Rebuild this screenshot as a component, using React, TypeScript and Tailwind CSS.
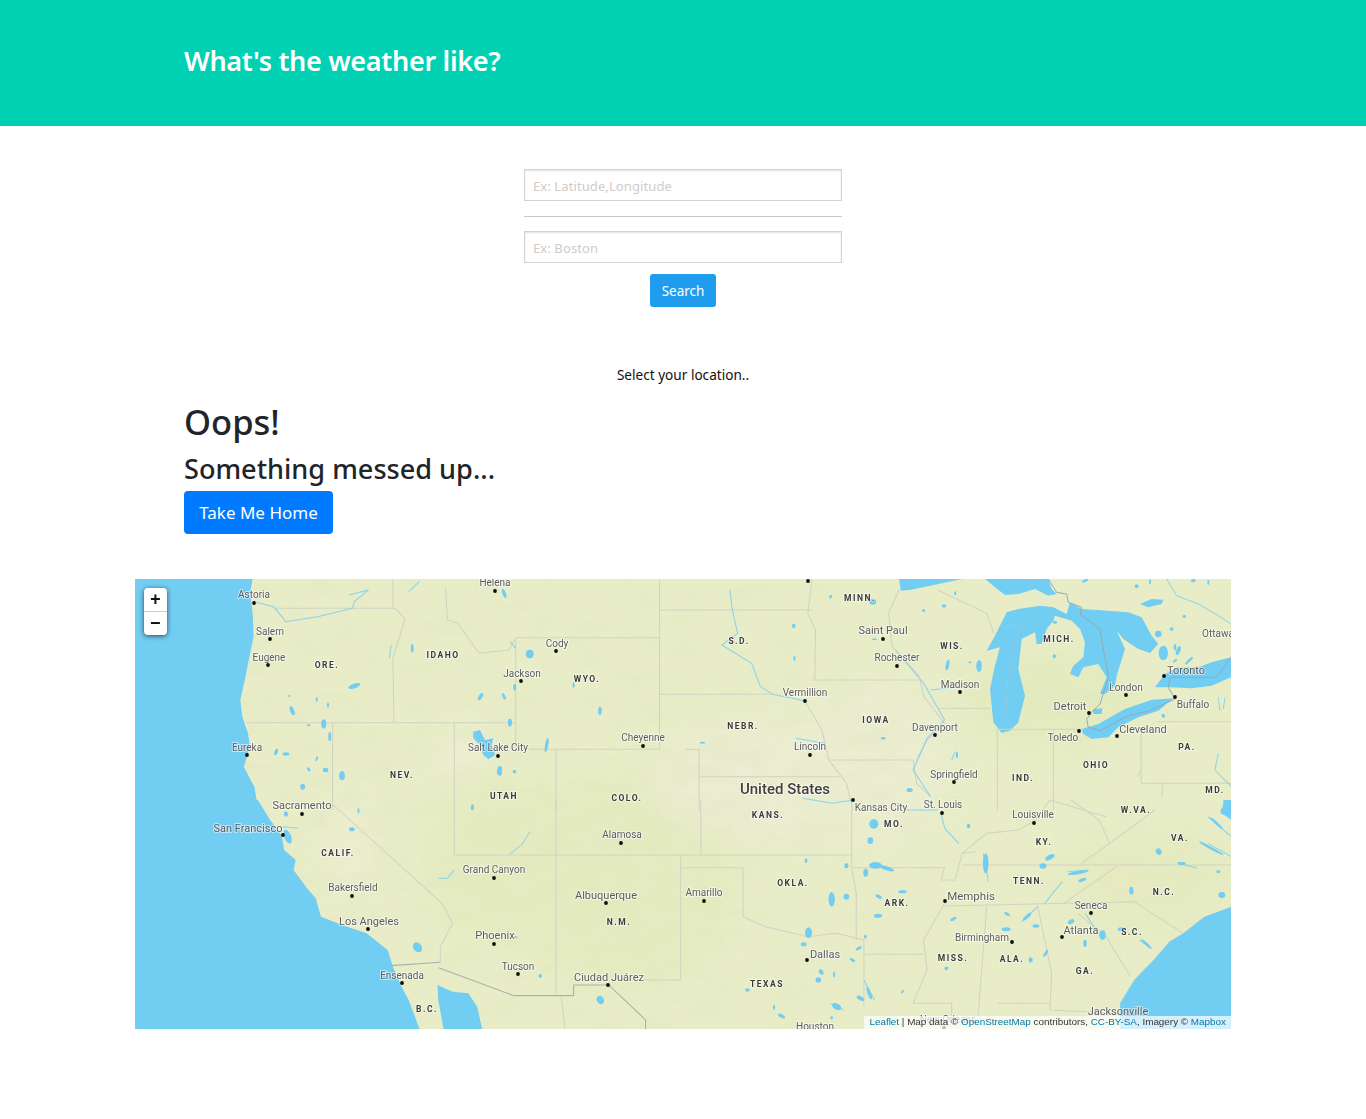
import React from "react";

const WATER = "#72cdf3";
const Z1 = "translate(135,570) scale(0.3509,0.3333)";
const Z2 = "translate(685,570) scale(0.3509,0.3333)";
const Z3 = "translate(135,800) scale(0.3509,0.3333)";
const Z4 = "translate(685,800) scale(0.3509,0.3333)";
const ZL = "translate(985,579) scale(0.3333)";
const ZU = "translate(430,690) scale(0.3333)";

type C = [string, number, number, number?, number?, number?];
const cities: C[] = [
  ["Helena",495,586,495,591],["Astoria",254,598,254,603],["Salem",270,635,270,639],["Eugene",269,661,268,665],
  ["Cody",557,647,556,651],["Jackson",522,677,521,681],["Saint Paul",883,634,883,639,11],["Rochester",897,661,897,666],
  ["Vermillion",805,696,805,701],["Madison",960,688,960,692],["Davenport",935,731,935,735],["Lincoln",810,750,810,755],
  ["Eureka",247,751,247,755],["Salt Lake City",498,751,498,756],["Cheyenne",643,741,643,746],["Ottawa",1218,637],
  ["Toronto",1186,674,1164,676,11],["London",1126,691,1126,695],["Buffalo",1193,708,1175,697],["Detroit",1070,710,1089,713,11],
  ["Toledo",1063,741,1079,731],["Cleveland",1143,733,1117,736,11],["Springfield",954,778,954,782],["Kansas City",881,811,853,800],
  ["St. Louis",943,808,942,813],["Louisville",1033,818,1034,823],["Sacramento",302,809,302,814,11],["San Francisco",248,832,283,835,11],
  ["Alamosa",622,838,621,843],["Grand Canyon",494,873,494,878],["Bakersfield",353,891,352,896],["Albuquerque",606,899,606,903,11],
  ["Amarillo",704,896,704,901],["Memphis",971,900,945,901,11.5],["Seneca",1091,909,1091,913],["Los Angeles",369,925,368,929,11],
  ["Phoenix",495,939,494,944,11],["Birmingham",982,941,1012,942],["Atlanta",1081,934,1062,937,11],["Tucson",518,970,518,974],
  ["Dallas",825,958,807,960,11],["Ciudad Juárez",609,981,608,985,11],["Ensenada",402,979,402,983],["Jacksonville",1118,1015,undefined,undefined,11],
  ["Houston",815,1030,undefined,undefined,10],["New Orleans",948,1023,944,1028,10],
];
const states: [string, number, number][] = [
  ["ORE.",327,668],["IDAHO",443,658],["WYO.",587,682],["MINN.",860,601],["S.D.",739,644],["WIS.",952,649],["MICH.",1059,642],
  ["NEBR.",743,729],["IOWA",876,723],["NEV.",402,778],["UTAH",504,799],["COLO.",627,801],["KANS.",768,818],["MO.",894,827],
  ["IND.",1023,781],["OHIO",1096,768],["PA.",1187,750],["MD.",1215,793],["W.VA.",1136,813],["VA.",1180,841],["KY.",1044,845],
  ["CALIF.",338,856],["N.M.",619,925],["OKLA.",793,886],["ARK.",897,906],["TENN.",1029,884],["N.C.",1164,895],["S.C.",1132,935],
  ["GA.",1085,974],["ALA.",1012,962],["MISS.",953,961],["TEXAS",767,987],["B.C.",427,1012],
];

const borders: Record<string, string[]> = {
  [Z1]: [
    "M400 115H740L770 145L735 265L738 458","M315 458H1085","M910 458V720","M563 458V720","M735 27V115",
    "M885 50L890 150L920 160L980 250L1065 240L1085 205","M1085 203H1495V538H1085V203","M1200 538V720","M1495 27V203","M1495 120H1568","M1495 373H1568",
  ],
  [Z2]: [
    "M0 120H362","M362 27L350 130L372 180L370 330","M0 373H250","M362 330H670L680 380L740 460L690 510L660 570","M410 570H650L660 640L700 680","M340 390L390 480L410 570L460 640L478 720",
    "M40 620H440","M40 538H0","M40 538V720","M610 60L580 130L590 230L670 320","M720 415H870","M720 60L860 130L880 190","M890 480V720","M1050 478V720","M890 478H1135","M1300 490V640H1557","M1345 455H1557","M1360 640V680","M1300 600L1290 620",
  ],
  [Z3]: ["M910 0V165","M910 165H1568","M1200 0V585","M1555 165V540H1450","M1555 205H1568","M565 15L875 310L905 370L870 440L870 490","M1215 590L1225 687"],
  [Z4]: [
    "M0 165H475","M45 0V165","M475 0V203L488 280V420","M0 203H165V350L230 380L350 410L430 400L510 420V620","M480 203H740L730 240H770L790 160L860 100L950 90L1000 60L1040 0",
    "M510 463H680","M740 310L680 420L690 510L650 610","M650 610H760V650","M790 195H1557","M740 318L1280 305L1420 400","M860 318L835 650","M1005 318L1045 520L1040 630L1240 640",
    "M1120 340L1200 410L1270 530","M890 610H1040","M1130 190L1210 130L1340 30","M1210 130L1180 60L1100 0","M790 160L830 155","M1080 310L1120 280L1230 200","M1040 0L1200 50",
  ],
};

const rivers: Record<string, string[]> = {
  [Z1]: ["M340 95L395 110L430 155L520 140L620 115L625 95L665 60L610 75","M730 225L725 265","M1070 215L1085 235","M810 35L780 65"],
  [Z2]: [
    "M128 60L135 120L150 190L105 225L190 280L215 350L250 373L340 392","M600 240L680 340L740 450L690 505L650 600L700 680","M700 360L780 350","M315 505L400 520","M770 545L760 570","M1520 550L1510 600L1557 650","M335 685L420 700L478 690",
  ],
  [Z3]: ["M865 235L890 235L910 210","M420 80L465 85"],
  [Z4]: ["M730 40L740 85L780 130","M630 30L720 30","M850 160L865 245","M1025 310L1075 245","M960 365L1005 320","M1090 215L1150 210","M1405 190L1460 205","M1490 50L1557 110","M1490 130L1557 170","M1140 340L1190 420","M1295 420L1330 445","M510 540L540 600","M415 610L450 630","M490 590L510 600"],
  [ZL]: ["M545 0L575 50L640 75L700 110L738 135","M700 355L705 395","M720 355L715 390"],
  [ZU]: ["M300 425L275 465L235 495"],
};

const blobs: Record<string, number[][]> = {
  [Z1]: [
    [625,348,18,7,-20],[518,388,3,8],[550,405,3,8],[448,422,6,14,-20],[538,462,7,14],[555,500,4,14],[1068,458,5,12],[985,380,5,12,30],[1052,380,4,10,-20],[790,235,4,13],[1125,252,11,13],
    [1082,352,4,10],[1250,345,3,9],[1325,422,4,12],[402,546,5,10,20],[430,552,10,5],[518,566,3,8,20],[495,598,4,7,-30],[543,600,8,7],[590,617,8,14],[478,650,7,9],[1040,603,6,14],[1082,605,4,5],
    [1052,70,5,14,-20],[440,378,3,3],[495,466,5,3],
  ],
  [Z2]: [
    [535,95,10,9],[310,168,5,7],[312,265,3,8],[680,122,5,4],[738,108,6,5],[770,70,3,6],[748,285,5,16,10],[838,288,8,18],[812,277,4,3],[565,505,7,4],[775,555,3,10],[640,660,9,6],[50,518,8,3],[415,80,4,6,20],[540,208,7,3],
  ],
  [Z3]: [
    [637,32,3,8],[618,88,8,6],[962,22,4,9],[805,442,12,16,-30],[1155,528,5,6],[1326,600,10,13,-20],[1085,412,5,3],[555,393,5,3],[578,390,4,2],[655,438,2,3],[430,42,6,8],[435,110,10,22,-20],
  ],
  [Z4]: [
    [538,72,13,14],[528,122,8,10],[808,78,5,7],[345,182,4,7],[460,197,6,8],[543,196,18,10],[575,205,22,6,20],[515,218,7,12],[620,275,12,5],[552,290,10,5,30],[550,347,12,6],[418,298,9,22],[460,290,8,9],[352,398,10,16],[338,433,8,6],
    [514,410,4,6],[495,445,10,4,-30],[477,480,9,4,30],[388,516,6,9,-30],[380,540,8,8],[425,523,3,9],[178,570,7,5],[254,622,3,8],[275,648,11,5,30],[432,620,14,9,30],[620,575,6,3,-40],[500,595,12,6,30],[525,580,5,20,-20],[418,653,4,5],
    [857,190,8,30],[1040,172,15,7,-30],[1020,198,10,8],[1120,218,30,5,-10],[1132,240,12,5,-20],[765,357,10,4,-30],[918,342,9,4,30],[915,388,13,6],[1000,378,10,5],[975,350,16,5,-45],[1028,460,4,12,30],[985,480,6,8],[1140,430,5,11],
    [745,505,6,5,-30],[1272,272,6,12],[1245,388,12,6],[1190,405,9,14],[1315,432,20,4,45],[1350,155,8,10,-30],[1100,365,10,6,-30],[1460,380,4,12],[1530,285,10,9],[1415,190,12,5],[1520,215,6,4],[1500,145,40,4,30],[1540,30,12,16,40],[1515,70,25,4,45],
  ],
  [ZL]: [
    [210,130,6,5],[208,232,5,6],[535,222,14,22],[580,215,6,14,20],[612,245,16,4,-45],[570,205,4,10],[520,165,10,10],[560,150,6,5],[598,112,5,5],[455,22,6,6],[625,5,7,5],[300,5,10,4,-20],[670,10,3,8],[495,8,3,8],[570,245,8,3,-40],[535,410,5,6,-30],
  ],
  [ZU]: [
    [150,20,4,11,30],[220,18,3,9,-25],[240,97,6,11],[350,165,5,22,10],[510,62,5,12],[127,352,5,8],[253,245,5,5],[208,242,7,14,10],
  ],
};

function MapArt() {
  return (
    <svg viewBox="135 579 1096 450" className="block h-full w-full">
      <defs>
        <filter id="soft"><feGaussianBlur stdDeviation="0.35" /></filter>
        <filter id="patch"><feGaussianBlur stdDeviation="14" /></filter>
        <filter id="hill" x="0" y="0" width="100%" height="100%">
          <feTurbulence type="fractalNoise" baseFrequency="0.03 0.055" numOctaves="4" seed="11" />
          <feColorMatrix values="0 0 0 0 0.72  0 0 0 0 0.77  0 0 0 0 0.46  2.2 0 0 0 -1.02" />
        </filter>
        <linearGradient id="fade" x1="0" x2="1" y1="0" y2="0">
          <stop offset="0" stopColor="#fff" />
          <stop offset="0.5" stopColor="#fff" />
          <stop offset="0.8" stopColor="#fff" stopOpacity="0.35" />
          <stop offset="1" stopColor="#fff" stopOpacity="0.2" />
        </linearGradient>
        <mask id="hillMask"><rect x="135" y="579" width="1096" height="450" fill="url(#fade)" /></mask>
      </defs>
      <rect x="135" y="579" width="1096" height="450" fill="#e8edc8" />
      <g filter="url(#patch)" opacity="0.7">
        <ellipse cx="620" cy="880" rx="120" ry="110" fill="#e4ebbe" />
        <ellipse cx="500" cy="860" rx="80" ry="90" fill="#e4ebbe" />
        <ellipse cx="1050" cy="700" rx="90" ry="50" fill="#e3eabc" />
        <ellipse cx="1150" cy="880" rx="90" ry="60" fill="#e4eabf" />
        <ellipse cx="780" cy="780" rx="130" ry="60" fill="#edecd4" />
        <ellipse cx="880" cy="760" rx="70" ry="80" fill="#ecedd3" />
        <ellipse cx="462" cy="760" rx="12" ry="26" fill="#f6eee2" />
        <ellipse cx="350" cy="850" rx="18" ry="45" fill="#f0edd6" />
      </g>
      <g mask="url(#hillMask)">
        <rect x="135" y="579" width="1096" height="450" filter="url(#hill)" opacity="0.28" />
      </g>
      <g filter="url(#soft)">
        <g fill={WATER}>
          <g transform={Z1}>
            <path d="M0 27H335L328 70L332 100L336 140L338 200L326 260L315 320L300 390L306 440L322 490L328 530L310 590L340 650L352 720H0Z" />
          </g>
          <g transform={Z3}>
            <path d="M0 0H350L385 60L418 105L425 150L458 180L452 210L490 265L515 295L530 350L590 375L660 400L720 450L735 500L760 560L780 600L812 690H0Z" />
            <path d="M880 690L864 600L862 555L905 575L950 580L975 620L990 690Z" />
          </g>
          <g transform={Z4}>
            <path d="M1240 690V610L1280 540L1340 475L1380 425L1420 400L1480 350L1557 320V690Z" />
            <path d="M1535 0L1557 0V60L1530 40Z" />
          </g>
          <g transform={Z2}>
            <path d="M610 27H790L640 60L615 62Z" />
          </g>
          <g transform={ZL}>
            <path d="M0 0H190L200 30L215 45L190 50L150 30L100 45L60 48L30 25Z" />
            <path d="M50 462L25 430L15 330L30 260L45 205L5 215L30 170L65 100L100 90L165 80L205 85L245 105L255 70L290 90L370 95L430 100L470 115L500 170L520 195L495 222L460 210L415 180L395 155L420 210L395 290L390 320L360 345L345 345L365 295L340 255L295 265L280 295L255 285L265 260L295 235L300 190L285 150L260 125L210 110L205 125L185 150L170 195L155 195L150 160L110 180L100 270L120 350L100 430L75 455Z" />
            <path d="M510 325L540 285L580 265L640 265L680 250L738 235V295L680 320L620 328L555 325Z" />
            <path d="M325 390L352 388L350 405L325 405Z" />
            <path d="M290 450L340 435L420 390L500 362L565 358L520 395L460 415L400 445L370 475L320 480L295 465Z" />
            <path d="M465 75L500 60L535 62L530 75L490 85Z" />
          </g>
          <g transform={ZU}>
            <path d="M130 125L150 120L165 150L190 145L185 165L195 195L175 208L160 195L150 165L130 145Z" />
          </g>
        </g>
        {Object.entries(borders).map(([t, ds]) => (
          <g key={t} transform={t} fill="none" stroke="#d1d3c2" strokeWidth="3">
            {ds.map((d) => <path key={d} d={d} />)}
          </g>
        ))}
        <g transform={Z3} fill="none" stroke="#b0b0aa" strokeWidth="3.2">
          <path d="M730 497L870 487" />
          <path d="M865 503L1080 587H1250V555H1350L1425 630L1455 660V690" />
        </g>
        <g transform={ZL} fill="none" strokeWidth="3">
          <path stroke="#95a9b2" d="M190 0L215 40L245 45L250 70L290 85L285 105L345 150L370 295L345 375L320 400L305 420L310 445L345 455L430 410L490 397L570 360L550 325L555 295H695L738 235" />
          <path stroke="#a0c4d4" strokeWidth="2.5" d="M60 140L105 140L70 280L60 450" />
        </g>
        {Object.entries(rivers).map(([t, ds]) => (
          <g key={t} transform={t} fill="none" stroke={WATER} strokeWidth="3" strokeOpacity="0.8" strokeLinejoin="round">
            {ds.map((d) => <path key={d} d={d} />)}
          </g>
        ))}
        {Object.entries(blobs).map(([t, es]) => (
          <g key={t} transform={t} fill={WATER}>
            {es.map((e, i) => (
              <ellipse key={i} cx={e[0]} cy={e[1]} rx={e[2]} ry={e[3]} transform={e[4] ? `rotate(${e[4]} ${e[0]} ${e[1]})` : undefined} />
            ))}
          </g>
        ))}
        <g className="font-['Roboto',sans-serif]" textAnchor="middle" style={{ paintOrder: "stroke" }} stroke="#ffffff" strokeOpacity="0.55" strokeWidth="2" strokeLinejoin="round">
          {cities.map(([n, tx, ty, , , fs]) => (
            <text key={n} x={tx} y={ty} fontSize={fs ?? 10} fill="#5c5c5c">{n}</text>
          ))}
          <text x={785} y={794} fontSize={15} fontWeight={500} fill="#3f3f3f">United States</text>
          {states.map(([n, x, y]) => (
            <text key={n} x={x} y={y} fontSize={8.5} fontWeight={700} letterSpacing={1.5} fill="#3a3a3a">{n}</text>
          ))}
        </g>
        {cities.map(([, , , dx, dy], i) =>
          dx === undefined || dy === undefined ? null : <circle key={i} cx={dx} cy={dy} r={1.9} fill="#0d0d0d" />
        )}
        <circle cx={808} cy={581} r={1.9} fill="#0d0d0d" />
      </g>
    </svg>
  );
}

export default function App() {
  return (
    <div className="min-h-[1119px] bg-white font-['Noto_Sans',sans-serif]">
      <header className="flex h-[126px] items-center bg-[#00d1b2] pb-[4px] pl-[184px]">
        <h1 className="text-[27px] font-semibold tracking-[-0.3px] text-white">What's the weather like?</h1>
      </header>

      <section className="mx-auto flex w-[318px] flex-col items-center pt-[43px]">
        <input
          placeholder="Ex: Latitude,Longitude"
          className="h-[32px] w-full border border-[#d4d4d4] px-[8px] pt-[2px] text-[13px] tracking-[0.1px] shadow-[inset_0_1px_2px_rgba(10,10,10,0.12)] outline-none placeholder:text-[#cfcbcb]"
        />
        <div className="mt-[15px] h-px w-full bg-[#c8c8c8]" />
        <input
          placeholder="Ex: Boston"
          className="mt-[14px] h-[32px] w-full border border-[#d4d4d4] px-[8px] pt-[2px] text-[13px] tracking-[0.1px] shadow-[inset_0_1px_2px_rgba(10,10,10,0.12)] outline-none placeholder:text-[#cfcbcb]"
        />
        <button className="mt-[11px] h-[33px] w-[66px] rounded-[3px] bg-[#209cee] pt-[1px] text-[13.5px] text-white">Search</button>
        <p className="mt-[59px] text-[13.6px] leading-[18px] text-[#111]">Select your location..</p>
      </section>

      <section className="pl-[184px] pt-[15px] text-[#212529]">
        <h2 className="text-[34.5px] font-medium leading-[46px]">Oops!</h2>
        <h3 className="mt-[4px] text-[27.1px] font-medium leading-[40px]">Something messed up...</h3>
        <button className="mt-[2px] h-[43px] w-[149px] rounded-[4px] bg-[#007bff] text-[17px] text-white">Take Me Home</button>
      </section>

      <section className="relative ml-[135px] mt-[45px] h-[450px] w-[1096px] overflow-hidden">
        <MapArt />
        <div className="absolute left-[9px] top-[9px] flex w-[23px] flex-col overflow-hidden rounded-[4px] bg-white font-['Liberation_Mono',monospace] font-bold text-[#111] shadow-[0_1px_5px_rgba(0,0,0,0.65)]">
          <button className="flex h-[24px] items-center justify-center border-b border-[#ccc] text-[18px] leading-none">+</button>
          <button className="flex h-[23px] items-center justify-center text-[18px] leading-none">−</button>
        </div>
        <div className="absolute bottom-0 right-0 flex h-[13px] items-center whitespace-pre bg-white/70 px-[5px] font-['Liberation_Sans',sans-serif] text-[9.9px] text-[#333]">
          <span className="text-[#0078a8]">Leaflet</span>
          <span> | Map data © </span>
          <span className="text-[#0078a8]">OpenStreetMap</span>
          <span> contributors, </span>
          <span className="text-[#0078a8]">CC-BY-SA</span>
          <span>, Imagery © </span>
          <span className="text-[#0078a8]">Mapbox</span>
        </div>
      </section>
    </div>
  );
}
